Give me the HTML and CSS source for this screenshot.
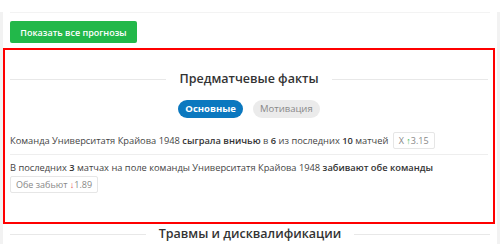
FILE: index.html
```html
<!DOCTYPE html>
<html lang="ru">
<head>
    <meta charset="UTF-8">
    <meta name="viewport" content="width=device-width, initial-scale=1.0">
    <title>Предматчевые факты</title>
    <link rel="stylesheet" href="styles.css">
</head>
<body>
    <div class="page">
        <div class="wrap">
            <div class="top-line"></div>
            <button class="btn-green" type="button">Показать все прогнозы</button>

            <div class="facts">
                <div class="section-title">
                    <span class="line"></span>
                    <h2>Предматчевые факты</h2>
                    <span class="line"></span>
                </div>

                <div class="tabs">
                    <span class="tab active">Основные</span>
                    <span class="tab">Мотивация</span>
                </div>

                <ul class="fact-list">
                    <li>
                        Команда Университатя Крайова 1948 <b>сыграла вничью</b> в <b>6</b> из последних <b>10</b> матчей
                        <span class="odd">X <span class="up">&#8593;</span>3.15</span>
                    </li>
                    <li>
                        В последних <b>3</b> матчах на поле команды Университатя Крайова 1948 <b>забивают обе команды</b><br>
                        <span class="odd">Обе забьют <span class="down">&#8595;</span>1.89</span>
                    </li>
                </ul>
            </div>

            <div class="section-title bottom">
                <span class="line"></span>
                <h2>Травмы и дисквалификации</h2>
                <span class="line"></span>
            </div>
        </div>
    </div>
</body>
</html>
```

FILE: styles.css
```css
* {
    margin: 0;
    padding: 0;
    box-sizing: border-box;
}

body {
    font-family: "Open Sans", Arial, sans-serif;
    background: #fff;
    color: #333;
    width: 500px;
    height: 244px;
    overflow: hidden;
}

.page {
    border-left: 3px solid #f2f2f2;
    border-right: 3px solid #f2f2f2;
    min-height: 244px;
}

.wrap {
    padding: 0 7px;
}

.top-line {
    height: 1px;
    margin-top: 12px;
    background-color: #f3f3f3;
}

.btn-green {
    display: block;
    margin-top: 8px;
    width: 127px;
    height: 22px;
    border: none;
    border-radius: 2px;
    background-color: #22b84a;
    color: #fff;
    font-family: "Open Sans", Arial, sans-serif;
    font-size: 9px;
    font-weight: 600;
    cursor: pointer;
}

.facts {
    margin: 5px -5px 0 -7px;
    border: 2px solid #f00;
    padding: 20px 5px 24px;
}

.section-title {
    display: flex;
    align-items: center;
    gap: 13px;
}

.section-title .line {
    flex: 1;
    height: 1px;
    background-color: #e8e8e8;
}

.section-title h2 {
    font-size: 12.5px;
    font-weight: 600;
    line-height: 18px;
    color: #333;
}

.section-title.bottom {
    margin-top: 1px;
}

.tabs {
    display: flex;
    justify-content: center;
    gap: 10px;
    margin-top: 12px;
}

.tab {
    height: 18px;
    line-height: 18px;
    padding: 0 7px;
    border-radius: 9px;
    background-color: #ebebeb;
    color: #888;
    font-size: 9.5px;
}

.tab.active {
    background-color: #0b78bf;
    color: #fff;
    font-weight: 700;
}

.fact-list {
    list-style-type: none;
    margin-top: 14px;
    font-size: 9.3px;
    line-height: 17px;
    color: #444;
}

.fact-list li {
    padding: 0 0 5px;
}

.fact-list li + li {
    border-top: 1px solid #eee;
    padding-top: 4px;
}

.fact-list b {
    color: #333;
    font-weight: 600;
}

.odd {
    display: inline-block;
    height: 17px;
    line-height: 15px;
    padding: 0 5px;
    border: 1px solid #e6e6e6;
    border-radius: 2px;
    font-size: 9px;
    color: #888;
    margin-left: 2px;
}

.fact-list li + li .odd {
    margin-left: 0;
}

.up {
    color: #2eb84a;
}

.down {
    color: #e54b4b;
}
```
